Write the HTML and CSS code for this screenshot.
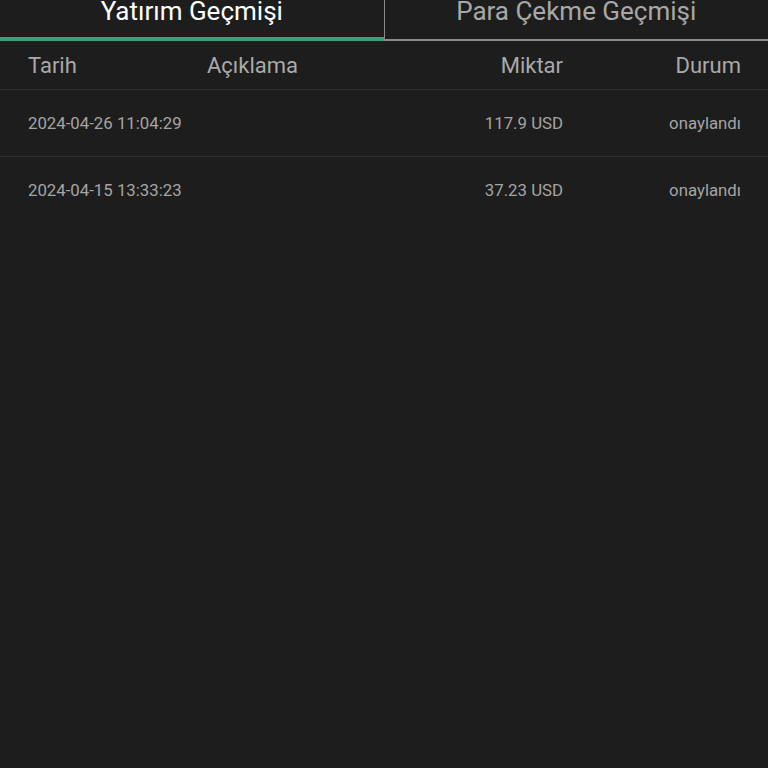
FILE: index.html
```html
<!DOCTYPE html>
<html lang="tr">
<head>
<meta charset="utf-8">
<title>Geçmiş</title>
<link rel="stylesheet" href="styles.css">
</head>
<body>
<div class="tabs">
  <div class="tab active">Yatırım Geçmişi</div>
  <div class="tab">Para Çekme Geçmişi</div>
</div>
<div class="table">
  <div class="row head">
    <div>Tarih</div>
    <div>Açıklama</div>
    <div class="r">Miktar</div>
    <div class="r">Durum</div>
  </div>
  <div class="row item">
    <div>2024-04-26 11:04:29</div>
    <div></div>
    <div class="r">117.9 USD</div>
    <div class="r">onaylandı</div>
  </div>
  <div class="row item last">
    <div>2024-04-15 13:33:23</div>
    <div></div>
    <div class="r">37.23 USD</div>
    <div class="r">onaylandı</div>
  </div>
</div>
</body>
</html>
```

FILE: styles.css
```css
html, body {
  margin: 0;
  padding: 0;
  background: #1d1d1d;
  height: 100%;
}
body {
  font-family: Roboto, "Noto Sans", sans-serif;
  overflow: hidden;
}
.tabs {
  display: flex;
  height: 41px;
}
.tab {
  flex: 1;
  text-align: center;
  font-size: 26px;
  line-height: 22px;
  color: #a8a8a8;
  box-sizing: border-box;
  border-bottom: 2px solid #8a8a8a;
  border-left: 1.5px solid #8a8a8a;
}
.tab.active {
  color: #ffffff;
  border-left: none;
  border-bottom: 4px solid #3a9e78;
}
.row {
  display: grid;
  grid-template-columns: 179px 1fr 150px 178px;
  padding: 0 27px 0 28px;
  align-items: center;
  border-bottom: 1.5px solid #2e2e2e;
}
.row .r {
  text-align: right;
}
.head {
  height: 48px;
  font-size: 22px;
  color: #a9a9a9;
}
.item {
  height: 66px;
  font-size: 16.8px;
  color: #a4a4a4;
}
.item.last {
  border-bottom: none;
}
```
